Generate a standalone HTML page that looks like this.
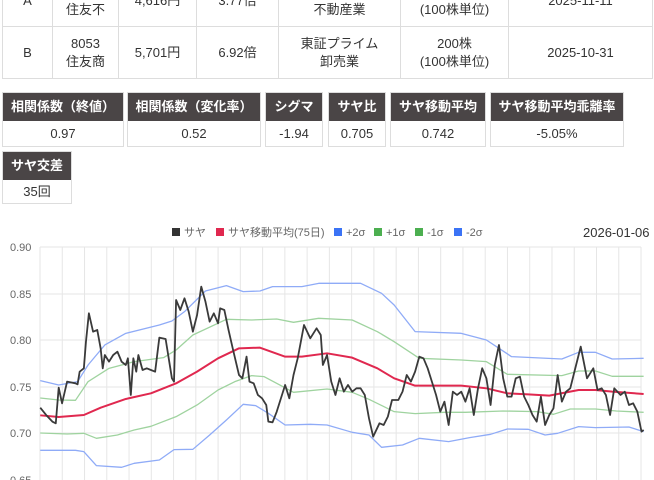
<!DOCTYPE html>
<html><head><meta charset="utf-8"><style>
*{margin:0;padding:0;box-sizing:border-box}
body{width:654px;height:480px;overflow:hidden;background:#fff;font-family:"Liberation Sans","Noto Sans CJK JP",sans-serif;color:#333;font-size:13px;position:relative}
.t{position:absolute;left:2px;top:-26px;border-collapse:collapse}
.t td{border:1px solid #ddd;text-align:center;line-height:18px;height:52px;padding:0}
.b{position:absolute;border:1px solid #ddd;text-align:center}
.b .h{background:#4a4546;color:#fff;font-weight:bold;height:28px;line-height:28px;font-size:13px}
.b .v{line-height:25px;height:25px}
</style></head><body>
<table class="t">
<tr><td style="width:50px">A</td><td style="width:66px">8830<br>住友不</td><td style="width:78px">4,616円</td><td style="width:82px">3.77倍</td><td style="width:122px">東証プライム<br>不動産業</td><td style="width:108px">100株<br>(100株単位)</td><td style="width:144px">2025-11-11</td></tr>
<tr><td>B</td><td>8053<br>住友商</td><td>5,701円</td><td>6.92倍</td><td>東証プライム<br>卸売業</td><td>200株<br>(100株単位)</td><td>2025-10-31</td></tr>
</table>
<div class="b" style="left:2px;top:92px;width:122px"><div class="h">相関係数（終値）</div><div class="v">0.97</div></div>
<div class="b" style="left:127px;top:92px;width:134px"><div class="h">相関係数（変化率）</div><div class="v">0.52</div></div>
<div class="b" style="left:265px;top:92px;width:58px"><div class="h">シグマ</div><div class="v">-1.94</div></div>
<div class="b" style="left:328px;top:92px;width:58px"><div class="h">サヤ比</div><div class="v">0.705</div></div>
<div class="b" style="left:390px;top:92px;width:96px"><div class="h">サヤ移動平均</div><div class="v">0.742</div></div>
<div class="b" style="left:490px;top:92px;width:134px"><div class="h">サヤ移動平均乖離率</div><div class="v">-5.05%</div></div>
<div class="b" style="left:2px;top:151px;width:70px"><div class="h">サヤ交差</div><div class="v" style="height:23px;line-height:23px">35回</div></div>
<svg style="position:absolute;left:0;top:0" width="654" height="480">
<g font-size="11" fill="#666" font-family="Liberation Sans,Noto Sans CJK JP,sans-serif">
<rect x="172" y="228" width="8" height="8" fill="#333"/><text x="184" y="236">サヤ</text>
<rect x="216" y="228" width="8" height="8" fill="#e0284f"/><text x="228" y="236">サヤ移動平均(75日)</text>
<rect x="334" y="228" width="8" height="8" fill="#3b73f5"/><text x="346" y="236">+2σ</text>
<rect x="374" y="228" width="8" height="8" fill="#4caf50"/><text x="386" y="236">+1σ</text>
<rect x="415" y="228" width="8" height="8" fill="#4caf50"/><text x="427" y="236">-1σ</text>
<rect x="454" y="228" width="8" height="8" fill="#3b73f5"/><text x="466" y="236">-2σ</text>
<text x="583" y="237" font-size="13" fill="#333">2026-01-06</text>
<text x="10" y="251">0.90</text><text x="10" y="298">0.85</text><text x="10" y="344">0.80</text><text x="10" y="391">0.75</text><text x="10" y="437">0.70</text><text x="10" y="484">0.65</text>
</g>
<g stroke="#e6e6e6" stroke-width="1">
<line x1="40" y1="247" x2="641" y2="247"/><line x1="40" y1="294" x2="641" y2="294"/><line x1="40" y1="340" x2="641" y2="340"/><line x1="40" y1="387" x2="641" y2="387"/><line x1="40" y1="433" x2="641" y2="433"/>
</g>
<g stroke="#e6e6e6" id="vg"></g>
<g transform="translate(0,215) scale(0.4193,0.3333)" fill="none" stroke-linejoin="round">
<polyline vector-effect="non-scaling-stroke" stroke="#8fabf7" stroke-width="1.3" points="96,497 140,510 185,500 210,450 250,390 300,355 380,330 410,318 440,290 490,228 540,212 580,230 620,228 650,215 720,215 760,205 860,205 910,235 940,270 990,350 1100,355 1160,375 1220,425 1340,432 1380,412 1420,412 1460,432 1535,430"/>
<polyline vector-effect="non-scaling-stroke" stroke="#9fd39f" stroke-width="1.3" points="96,549 140,555 180,556 210,500 260,460 320,440 390,428 420,405 460,360 540,313 600,315 660,312 700,322 760,310 840,315 900,350 940,380 1000,430 1100,435 1160,440 1210,478 1340,482 1380,468 1420,468 1460,484 1535,484"/>
<polyline vector-effect="non-scaling-stroke" stroke="#e0284f" stroke-width="2" points="96,601 140,606 200,600 240,578 300,552 360,535 420,505 470,470 520,430 570,400 620,398 680,425 720,425 780,415 840,428 900,460 940,490 990,512 1040,512 1100,512 1160,520 1210,535 1260,538 1310,542 1380,525 1420,525 1460,530 1535,537"/>
<polyline vector-effect="non-scaling-stroke" stroke="#9fd39f" stroke-width="1.3" points="96,654 160,657 200,655 230,670 280,660 320,645 360,634 420,605 470,570 520,525 560,500 600,482 630,485 700,532 780,522 840,532 880,553 940,590 990,596 1060,592 1110,592 1200,588 1280,590 1320,598 1360,582 1420,582 1470,588 1535,592"/>
<polyline vector-effect="non-scaling-stroke" stroke="#8fabf7" stroke-width="1.3" points="96,706 180,706 200,710 230,752 290,757 320,745 380,735 415,704 460,703 500,660 540,615 580,568 610,572 640,595 680,630 740,628 780,630 840,652 880,660 910,697 960,690 1000,670 1070,680 1120,668 1170,658 1210,642 1260,643 1300,660 1330,655 1380,635 1420,638 1500,636 1535,650"/>
<polyline vector-effect="non-scaling-stroke" stroke="#3a3a3a" stroke-width="1.8" points="96,578 110,600 125,620 133,625 140,518 148,565 160,500 180,505 185,508 190,470 200,460 205,380 212,295 222,350 232,345 240,400 245,460 250,420 260,440 270,420 280,410 290,440 300,450 305,430 312,540 318,430 325,470 330,420 340,465 350,460 360,465 370,470 380,368 395,372 410,490 415,500 420,255 430,285 440,250 450,290 460,350 470,300 480,215 490,260 500,320 510,295 520,325 525,280 535,285 545,345 555,400 570,480 578,490 588,425 595,500 605,505 615,540 625,550 635,570 640,620 650,622 660,590 680,510 690,550 700,480 710,430 725,330 740,370 755,340 765,360 770,450 780,420 790,500 800,540 810,490 820,530 830,510 840,530 850,520 860,520 870,540 880,610 890,665 905,625 915,630 925,605 935,555 950,555 960,530 970,480 980,500 990,470 1000,425 1010,430 1020,460 1030,500 1040,540 1050,590 1060,560 1070,630 1080,530 1090,540 1100,530 1110,560 1120,520 1130,600 1140,520 1150,460 1160,490 1170,570 1180,450 1190,390 1200,490 1210,545 1220,545 1230,490 1240,485 1250,545 1260,570 1270,600 1280,620 1290,545 1300,630 1310,600 1320,580 1330,480 1340,560 1350,530 1360,520 1370,470 1385,395 1400,490 1415,460 1425,525 1435,520 1445,540 1455,600 1465,520 1480,540 1490,530 1500,570 1510,565 1520,590 1530,650 1535,645"/>
</g>
</svg>
<script>
var g=document.getElementById('vg'),s='';for(var i=0;i<=27;i++){var x=40+i*22.26;s+='<line x1="'+x+'" y1="247" x2="'+x+'" y2="480"/>';}g.innerHTML=s;
</script>
</body></html>
